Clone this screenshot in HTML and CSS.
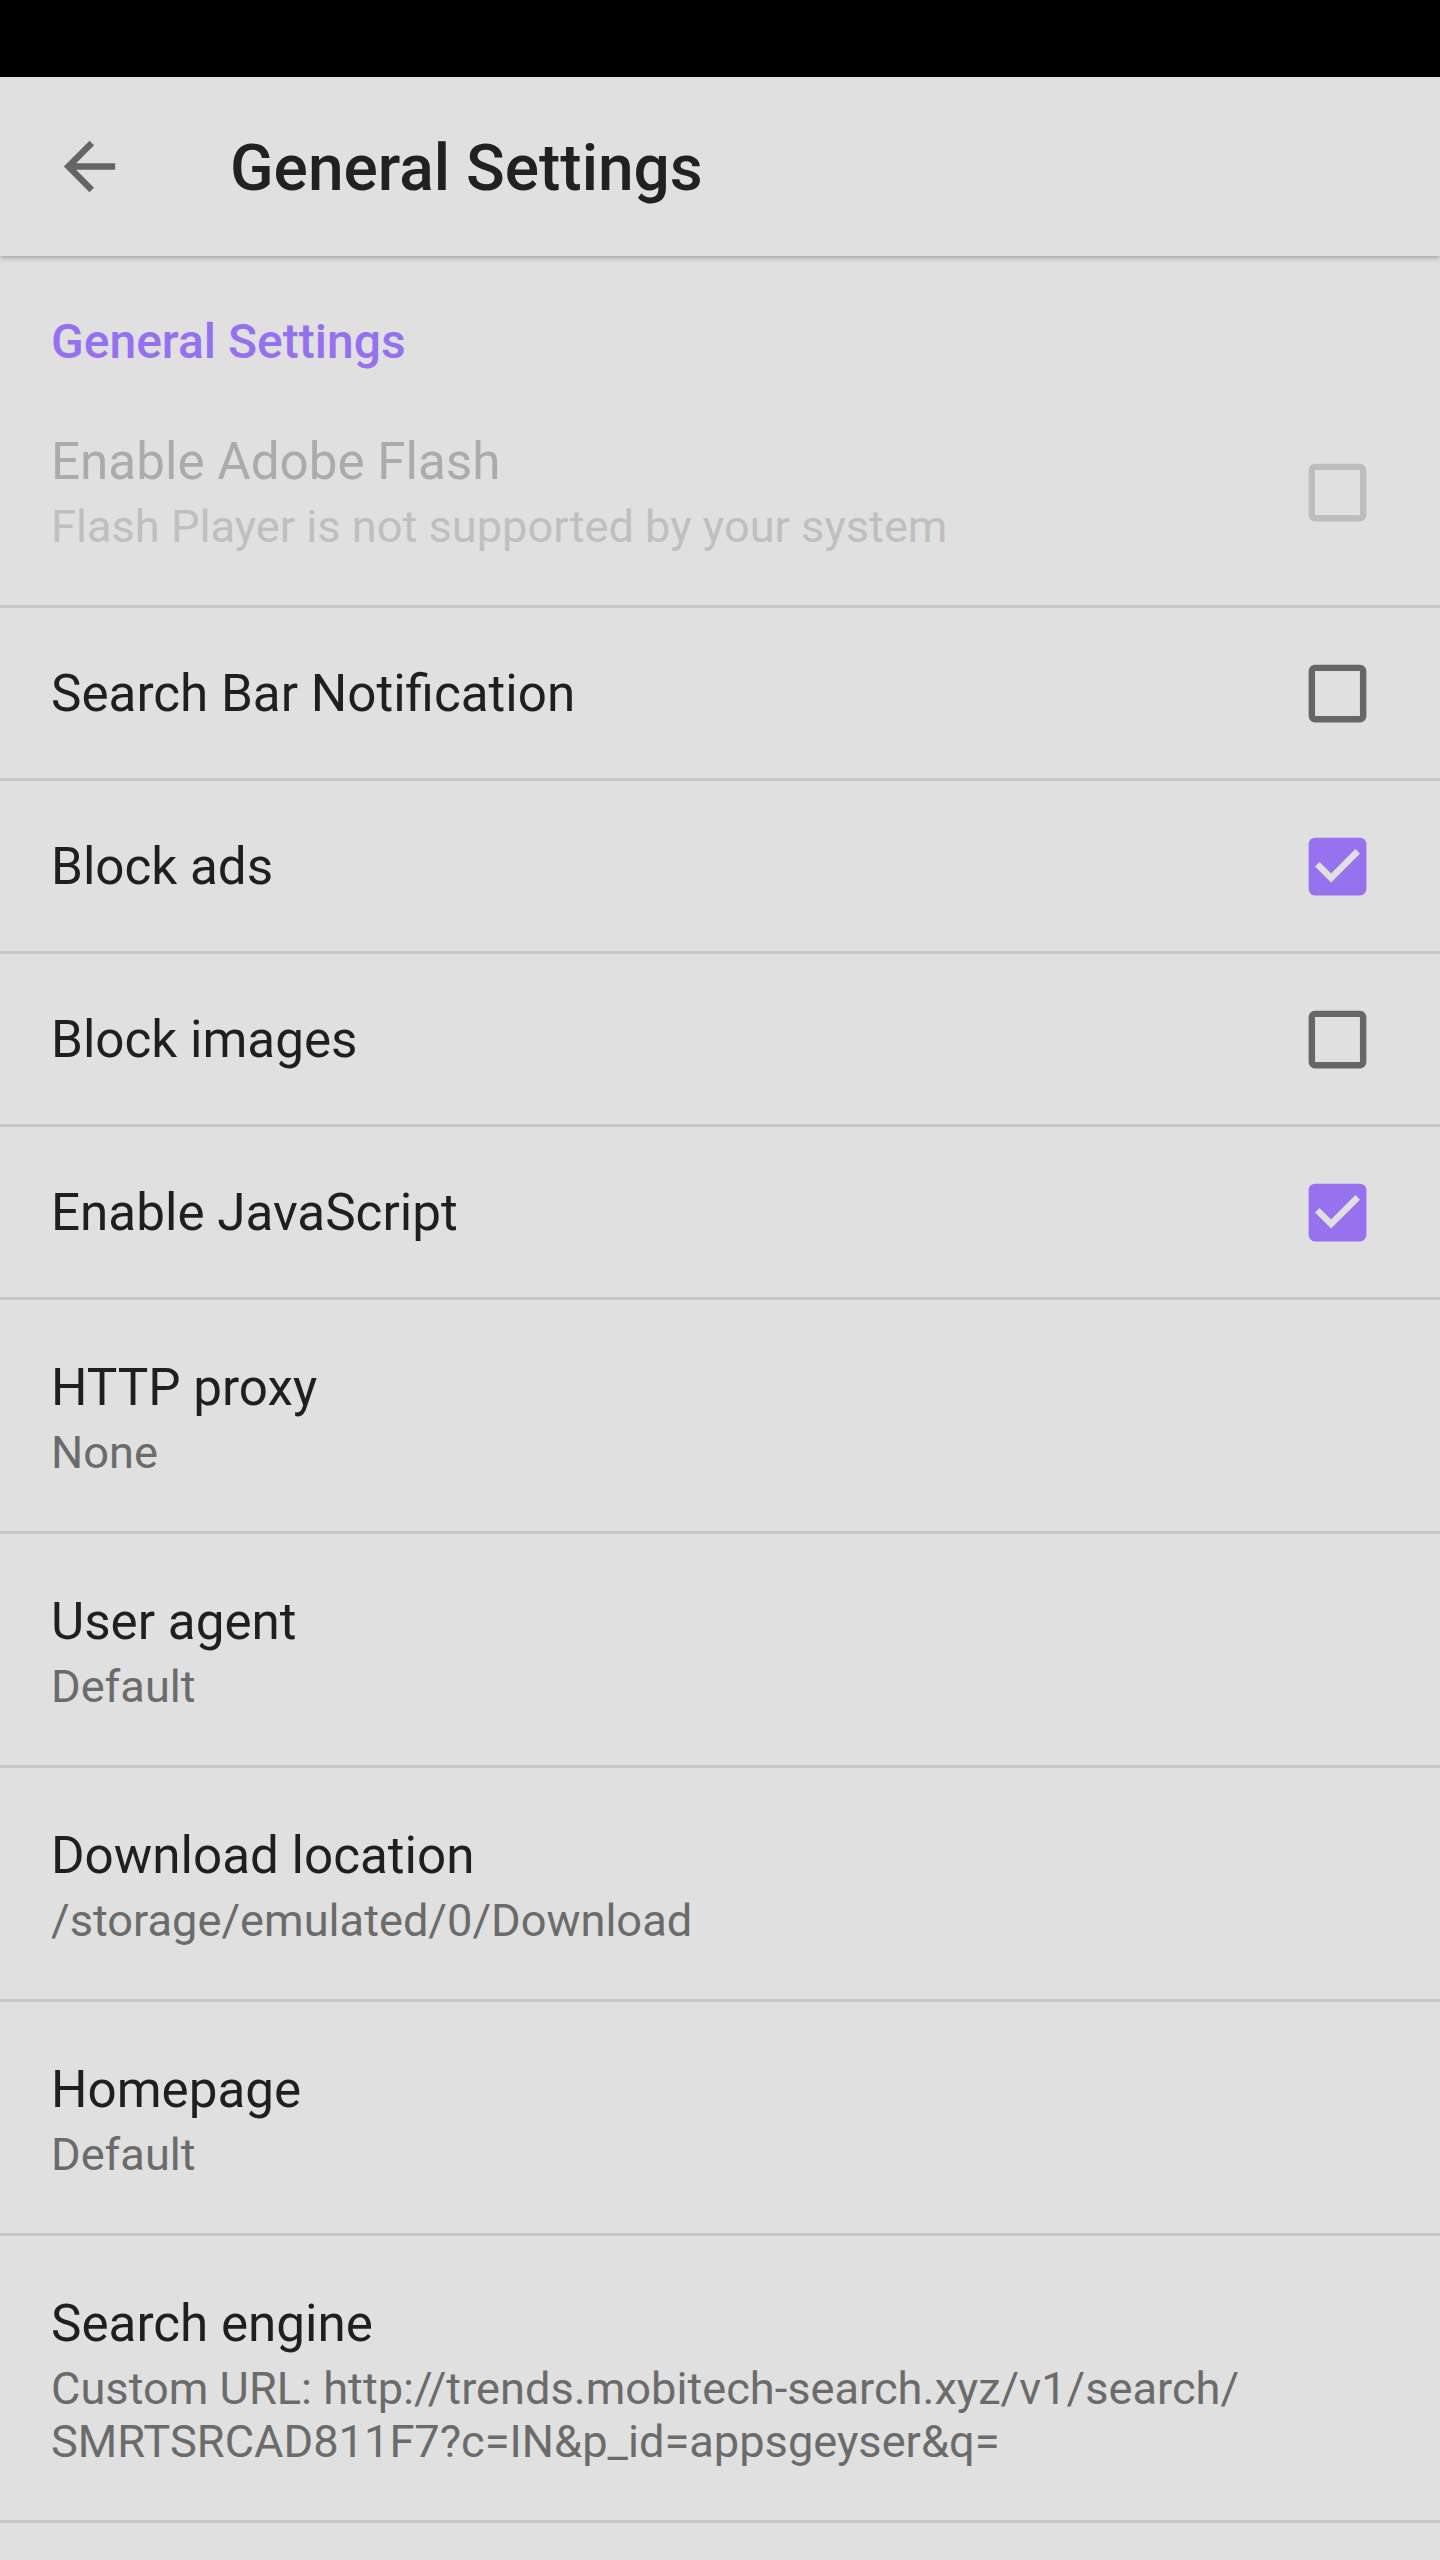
FILE: index.html
```html
<!DOCTYPE html>
<html lang="en">
<head>
<meta charset="utf-8">
<title>General Settings</title>
<link rel="stylesheet" href="styles.css">
</head>
<body>
<div class="statusbar"></div>
<header class="toolbar">
  <svg class="back" viewBox="0 0 24 24"><path d="M20 11H7.83l5.59-5.59L12 4l-8 8 8 8 1.41-1.41L7.83 13H20v-2z"/></svg>
  <h1 class="toolbar-title">General Settings</h1>
</header>
<main class="prefs">
  <div class="category">General Settings</div>

  <div class="pref two disabled">
    <div class="texts">
      <div class="title">Enable Adobe Flash</div>
      <div class="summary">Flash Player is not supported by your system</div>
    </div>
    <svg class="cb" viewBox="0 0 24 24"><path d="M19 5v14H5V5h14m0-2H5c-1.1 0-2 .9-2 2v14c0 1.1.9 2 2 2h14c1.1 0 2-.9 2-2V5c0-1.1-.9-2-2-2z"/></svg>
  </div>

  <div class="pref one">
    <div class="texts"><div class="title">Search Bar Notification</div></div>
    <svg class="cb" viewBox="0 0 24 24"><path d="M19 5v14H5V5h14m0-2H5c-1.1 0-2 .9-2 2v14c0 1.1.9 2 2 2h14c1.1 0 2-.9 2-2V5c0-1.1-.9-2-2-2z"/></svg>
  </div>

  <div class="pref one">
    <div class="texts"><div class="title">Block ads</div></div>
    <svg class="cb checked" viewBox="0 0 24 24"><rect class="box" x="3" y="3" width="18" height="18" rx="2"/><path class="tick" d="M10 17l-5-5 1.41-1.41L10 14.170l7.59-7.59L19 8l-9 9z"/></svg>
  </div>

  <div class="pref one">
    <div class="texts"><div class="title">Block images</div></div>
    <svg class="cb" viewBox="0 0 24 24"><path d="M19 5v14H5V5h14m0-2H5c-1.1 0-2 .9-2 2v14c0 1.1.9 2 2 2h14c1.1 0 2-.9 2-2V5c0-1.1-.9-2-2-2z"/></svg>
  </div>

  <div class="pref one">
    <div class="texts"><div class="title">Enable JavaScript</div></div>
    <svg class="cb checked" viewBox="0 0 24 24"><rect class="box" x="3" y="3" width="18" height="18" rx="2"/><path class="tick" d="M10 17l-5-5 1.41-1.41L10 14.17l7.59-7.59L19 8l-9 9z"/></svg>
  </div>

  <div class="pref two">
    <div class="texts">
      <div class="title">HTTP proxy</div>
      <div class="summary">None</div>
    </div>
  </div>

  <div class="pref two">
    <div class="texts">
      <div class="title">User agent</div>
      <div class="summary">Default</div>
    </div>
  </div>

  <div class="pref two">
    <div class="texts">
      <div class="title">Download location</div>
      <div class="summary">/storage/emulated/0/Download</div>
    </div>
  </div>

  <div class="pref two">
    <div class="texts">
      <div class="title">Homepage</div>
      <div class="summary">Default</div>
    </div>
  </div>

  <div class="pref two">
    <div class="texts">
      <div class="title">Search engine</div>
      <div class="summary">Custom URL: http://trends.mobitech-search.xyz/v1/search/<br>SMRTSRCAD811F7?c=IN&amp;p_id=appsgeyser&amp;q=</div>
    </div>
  </div>
</main>
</body>
</html>
```

FILE: styles.css
```css
html, body {
  margin: 0;
  padding: 0;
}

body {
  background: #e0e0e0;
  font-family: Roboto, "Noto Sans", "Liberation Sans", sans-serif;
  color: #1f1f1f;
  width: 1440px;
  min-height: 2560px;
  overflow: hidden;
}

.statusbar {
  height: 77px;
  background: #000;
}

.toolbar {
  height: 179px;
  display: flex;
  align-items: center;
  background: #e0e0e0;
  box-shadow: 0 2px 5px rgba(0, 0, 0, 0.28);
  position: relative;
  z-index: 1;
}

.back {
  width: 77px;
  height: 77px;
  margin-left: 51px;
  fill: #656565;
  flex: none;
}

.toolbar-title {
  margin: 0 0 0 102px;
  padding-top: 3px;
  font-size: 64px;
  font-weight: 500;
  line-height: 75px;
  color: #212121;
}

.prefs {
  display: flex;
  flex-direction: column;
}

.category {
  padding: 59px 51px 5px;
  font-size: 48px;
  font-weight: 500;
  line-height: 54px;
  color: #9570ef;
}

.pref {
  display: flex;
  align-items: center;
  padding-left: 51px;
  padding-right: 64px;
  border-bottom: 3px solid #c7c7c7;
}

.pref.one {
  padding-top: 47px;
  padding-bottom: 46px;
}

.pref.two {
  padding-top: 58px;
  padding-bottom: 52px;
}

.texts {
  flex: 1;
  min-width: 0;
}

.title {
  font-size: 51.2px;
  line-height: 60px;
  color: #1f1f1f;
}

.summary {
  margin-top: 8px;
  font-size: 45.2px;
  line-height: 53px;
  color: #6b6b6b;
}

.cb {
  width: 77px;
  height: 77px;
  flex: none;
  fill: #666666;
}

.cb.checked .box {
  fill: #9672ef;
}

.cb.checked .tick {
  fill: #e0e0e0;
}

.disabled .title {
  color: #ababab;
}

.disabled .summary {
  color: #bfbfbf;
}

.disabled .cb {
  fill: #bdbdbd;
}
```
